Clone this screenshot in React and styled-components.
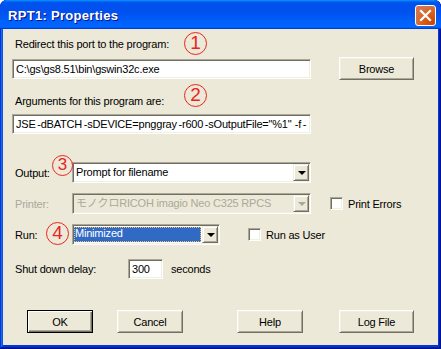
import React from 'react'
import styled, { createGlobalStyle } from 'styled-components'

const GlobalStyle = createGlobalStyle`
  html, body {
    margin: 0;
    padding: 0;
    background: #ffffff;
  }
  body {
    font-family: "Liberation Sans", Arial, "Noto Sans CJK JP", sans-serif;
    font-size: 11px;
    letter-spacing: -0.2px;
  }
`

function App() {
  return (
    <>
      <GlobalStyle />
      <Window>
        <TitleBar>
          <TitleText>RPT1: Properties</TitleText>
          <CloseButton aria-label="Close">
            <svg width="13" height="13" viewBox="0 0 13 13">
              <path d="M2 2 L11 11 M11 2 L2 11" stroke="#fff" strokeWidth="2.2" strokeLinecap="square" />
            </svg>
          </CloseButton>
        </TitleBar>

        <Client>
          <Caption $top={9}>Redirect this port to the program:</Caption>
          <Row $top={6} $between>
            <TextBox $width={299}>C:\gs\gs8.51\bin\gswin32c.exe</TextBox>
            <Button $width={75}>Browse</Button>
          </Row>

          <Caption $top={15}>Arguments for this program are:</Caption>
          <Row $top={6}>
            <TextBox $width={299} $tight>JSE -dBATCH -sDEVICE=pnggray -r600 -sOutputFile="%1"  -f -</TextBox>
          </Row>

          <Row $top={28}>
            <FieldLabel $width={60}>Output:</FieldLabel>
            <Combo $width={239}>
              <ComboText>Prompt for filename</ComboText>
              <DropButton><Arrow /></DropButton>
            </Combo>
          </Row>

          <Row $top={10}>
            <FieldLabel $width={60} $disabled>Printer:</FieldLabel>
            <Combo $width={239} $disabled>
              <ComboText $disabled>モノクロRICOH imagio Neo C325 RPCS</ComboText>
              <DropButton><Arrow $disabled /></DropButton>
            </Combo>
            <CheckLabel $gap={19}>
              <CheckBox />
              Print Errors
            </CheckLabel>
          </Row>

          <Row $top={10}>
            <FieldLabel $width={60}>Run:</FieldLabel>
            <Combo $width={148}>
              <Selected>Minimized</Selected>
              <DropButton><Arrow /></DropButton>
            </Combo>
            <CheckLabel $gap={28}>
              <CheckBox />
              Run as User
            </CheckLabel>
          </Row>

          <Row $top={14}>
            <FieldLabel $width={116}>Shut down delay:</FieldLabel>
            <TextBox $width={35}>300</TextBox>
            <Unit>seconds</Unit>
          </Row>

          <ButtonBar>
            <Button $width={66} $offset={15} $default>OK</Button>
            <Button $width={66} $offset={24}>Cancel</Button>
            <Button $width={66} $offset={54}>Help</Button>
            <Button $width={75} $offset={36}>Log File</Button>
          </ButtonBar>

          <Marker $x={181} $y={3} $size={23}>1</Marker>
          <Marker $x={181} $y={55} $size={23}>2</Marker>
          <Marker $x={49} $y={126} $size={21}>3</Marker>
          <Marker $x={43} $y={193} $size={23}>4</Marker>
        </Client>
      </Window>
    </>
  )
}

export default App

const Window = styled.div`
  width: 441px;
  height: 349px;
  display: flex;
  flex-direction: column;
  background: #0831d9;
  border-radius: 7px 7px 0 0;
  overflow: hidden;
  box-shadow: inset -1px -1px #00138c, inset 1px 1px #0831d9,
    inset -2px -2px #001ea0, inset 2px 2px #166aee,
    inset -3px -3px #003bda, inset 3px 3px #0855dd;
`

const TitleBar = styled.div`
  height: 29px;
  flex: 0 0 29px;
  display: flex;
  align-items: center;
  justify-content: space-between;
  padding: 0 5px 0 8px;
  box-sizing: border-box;
  background: linear-gradient(180deg, #0997ff, #0053ee 8%, #0050ee 40%, #06f 88%, #06f 93%, #005bff 95%, #003dd7 96%, #003dd7);
  border-radius: 7px 7px 0 0;
`

const TitleText = styled.div`
  color: #fff;
  font-family: "Liberation Sans", Arial, sans-serif;
  font-weight: 700;
  font-size: 13px;
  letter-spacing: 0.3px;
  text-shadow: 1px 1px #0f1089;
  margin-top: 1px;
`

const CloseButton = styled.div`
  width: 21px;
  height: 21px;
  box-sizing: border-box;
  border: 1px solid #fff;
  border-radius: 3px;
  display: flex;
  align-items: center;
  justify-content: center;
  background: radial-gradient(circle at 90% 90%, #cc4600 0%, #dc6527 55%, #cd7546 70%, #e0704f 90%);
  margin-top: 1px;
`

const Client = styled.div`
  position: relative;
  flex: 1;
  margin: 0 3px 4px 3px;
  background: #ece9d8;
  padding: 0 24px 0 9px;
  color: #000;
`

const Caption = styled.div`
  margin-top: ${p => p.$top}px;
  padding-left: 3px;
  line-height: 13px;
  height: 13px;
`

const Row = styled.div`
  margin-top: ${p => p.$top}px;
  display: flex;
  align-items: center;
  justify-content: ${p => (p.$between ? 'space-between' : 'flex-start')};
`

const sunken = `
  border-style: solid;
  border-width: 1px;
  border-color: #aca899 #fff #fff #aca899;
  box-shadow: inset 1px 1px #716f64, inset -1px -1px #f1efe2;
`

const TextBox = styled.div`
  width: ${p => p.$width}px;
  height: 20px;
  box-sizing: border-box;
  ${sunken}
  background: #fff;
  padding: 0 3px;
  line-height: 18px;
  white-space: pre;
  overflow: hidden;
  word-spacing: ${p => (p.$tight ? '-1.2px' : '0')};
`

const Button = styled.div`
  width: ${p => p.$width}px;
  height: 23px;
  box-sizing: border-box;
  margin-left: ${p => p.$offset || 0}px;
  display: flex;
  align-items: center;
  justify-content: center;
  background: #ece9d8;
  border: 1px solid ${p => (p.$default ? '#000' : '#fff')};
  border-right-color: ${p => (p.$default ? '#000' : '#716f64')};
  border-bottom-color: ${p => (p.$default ? '#000' : '#716f64')};
  box-shadow: ${p =>
    p.$default
      ? 'inset 1px 1px #fff, inset -1px -1px #716f64, inset -2px -2px #aca899'
      : 'inset 1px 1px #f1efe2, inset -1px -1px #aca899'};
`

const FieldLabel = styled.div`
  width: ${p => p.$width}px;
  flex: 0 0 ${p => p.$width}px;
  box-sizing: border-box;
  padding-left: 3px;
  color: ${p => (p.$disabled ? '#aca899' : '#000')};
`

const Combo = styled.div`
  width: ${p => p.$width}px;
  height: 21px;
  box-sizing: border-box;
  ${sunken}
  background: ${p => (p.$disabled ? '#ece9d8' : '#fff')};
  display: flex;
  align-items: stretch;
  padding: 1px;
`

const ComboText = styled.div`
  flex: 1;
  padding-left: 2px;
  line-height: 17px;
  white-space: nowrap;
  overflow: hidden;
  color: ${p => (p.$disabled ? '#aca899' : '#000')};
`

const Selected = styled.div`
  flex: 1;
  margin: 1px 1px 1px 0;
  background: #316ac5;
  color: #fff;
  line-height: 13px;
  padding-left: 1px;
  outline: 1px dotted #e8c060;
  outline-offset: -1px;
`

const DropButton = styled.div`
  width: 16px;
  flex: 0 0 16px;
  box-sizing: border-box;
  background: #ece9d8;
  border: 1px solid;
  border-color: #f1efe2 #716f64 #716f64 #f1efe2;
  box-shadow: inset 1px 1px #fff, inset -1px -1px #aca899;
  display: flex;
  align-items: center;
  justify-content: center;
`

const Arrow = styled.span`
  width: 0;
  height: 0;
  border-left: 4px solid transparent;
  border-right: 4px solid transparent;
  border-top: 4px solid ${p => (p.$disabled ? '#aca899' : '#000')};
  margin-left: 1px;
`

const CheckLabel = styled.div`
  margin-left: ${p => p.$gap}px;
  display: flex;
  align-items: center;
  gap: 5px;
`

const CheckBox = styled.span`
  width: 13px;
  height: 13px;
  box-sizing: border-box;
  ${sunken}
  background: #fff;
`

const Unit = styled.div`
  margin-left: 8px;
`

const ButtonBar = styled.div`
  margin-top: 31px;
  display: flex;
`

const Marker = styled.div`
  position: absolute;
  left: ${p => p.$x}px;
  top: ${p => p.$y}px;
  width: ${p => p.$size}px;
  height: ${p => p.$size}px;
  box-sizing: border-box;
  border: 1.5px solid #e8261e;
  border-radius: 50%;
  color: #e8261e;
  font-family: "Liberation Sans", Arial, sans-serif;
  font-size: ${p => p.$size - 4}px;
  line-height: ${p => p.$size - 3}px;
  letter-spacing: 0;
  text-align: center;
`
